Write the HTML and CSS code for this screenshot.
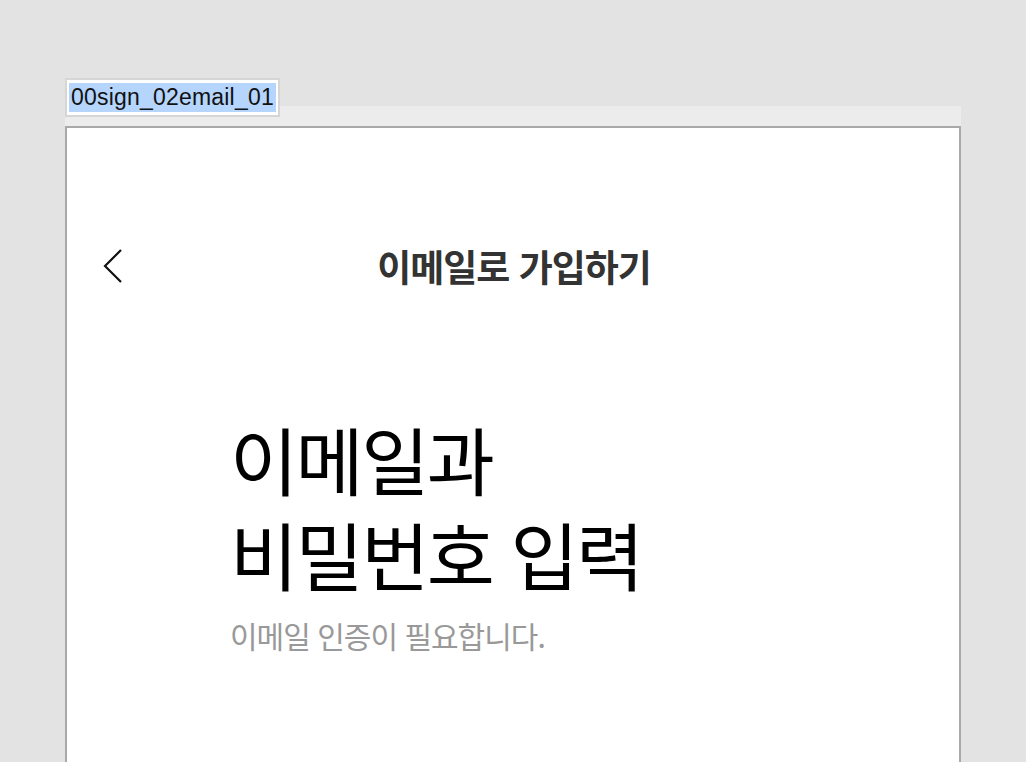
FILE: index.html
```html
<!DOCTYPE html>
<html lang="ko">

<head>
    <meta charset="UTF-8">
    <meta name="viewport" content="width=device-width, initial-scale=1.0">
    <title>00sign_02email_01</title>
    <link rel="stylesheet" href="styles.css">
</head>

<body>
    <div class="canvas">
        <div class="board-name"><span class="board-name-text">00sign_02email_01</span></div>

        <div class="board">
            <div class="board-bar"></div>
            <div class="screen">
                <div class="nav">
                    <div class="nav-back">
                        <svg width="20" height="34" viewBox="0 0 20 34">
                            <polyline points="18,1 2,17 18,33" fill="none" stroke="#111" stroke-width="2.2" />
                        </svg>
                    </div>
                    <div class="nav-title">이메일로 가입하기</div>
                    <div></div>
                </div>

                <div class="intro">
                    <h1 class="intro-title">이메일과<br>비밀번호 입력</h1>
                    <p class="intro-desc">이메일 인증이 필요합니다.</p>
                </div>
            </div>
        </div>
    </div>
</body>

</html>
```

FILE: styles.css
```css
body {
    margin: 0;
    background: #e3e3e3;
    font-family: "Noto Sans CJK KR", "Noto Sans", sans-serif;
    overflow: hidden;
}

.canvas {
    position: relative;
    padding: 106px 65px 0 65px;
    width: 896px;
}

/* 아트보드 이름표 */
.board-name {
    position: absolute;
    left: 65px;
    top: 78px;
    background: #fff;
    border: 2px solid #d6d6d6;
    padding: 3px 2px;
    line-height: 29px;
}

.board-name-text {
    display: block;
    background: #b5d5fd;
    padding: 0 2px;
    font-family: "Liberation Sans", Arial, sans-serif;
    font-size: 23px;
    letter-spacing: 0.2px;
    color: #111;
}

.board-bar {
    height: 20px;
    background: #ececec;
}

.screen {
    background: #fff;
    border: 2px solid #a9a9a9;
    border-bottom: none;
    height: 700px;
}

.nav {
    display: grid;
    grid-template-columns: 1fr auto 1fr;
    align-items: center;
    height: 64px;
    margin-top: 106px;
    padding-left: 36px;
}

.nav-back {
    display: flex;
    align-items: center;
}

.nav-title {
    font-size: 37px;
    font-weight: 700;
    color: #333;
    letter-spacing: -1px;
    margin-left: -34px;
}

.intro {
    padding-left: 163px;
    margin-top: 112px;
}

.intro-title {
    margin: 0;
    font-size: 74px;
    font-weight: 400;
    line-height: 95px;
    color: #000;
    letter-spacing: -2.5px;
}

.intro-desc {
    margin: 17px 0 0;
    font-size: 30px;
    line-height: 36px;
    color: #999;
    letter-spacing: -1px;
}
```
